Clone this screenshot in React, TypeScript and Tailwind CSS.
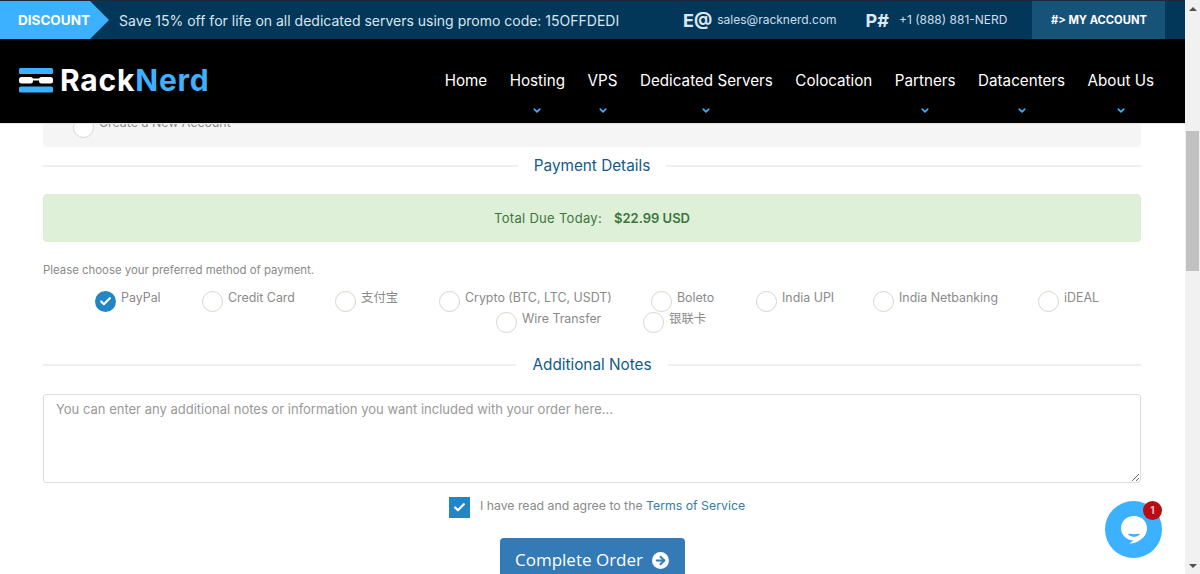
import React from 'react';
import { Check, ChevronDown, ArrowRight } from 'lucide-react';

const FONT = "font-['Inter','Noto_Sans_CJK_SC',sans-serif]";

const navItems = [
  { label: 'Home', caret: false },
  { label: 'Hosting', caret: true },
  { label: 'VPS', caret: true },
  { label: 'Dedicated Servers', caret: true },
  { label: 'Colocation', caret: false },
  { label: 'Partners', caret: true },
  { label: 'Datacenters', caret: true },
  { label: 'About Us', caret: true },
];

const Radio = ({ label, checked, className }: { label: string; checked?: boolean; className: string }) => (
  <div className={`flex items-start gap-[5px] ${className}`}>
    {checked ? (
      <span className="mt-[2px] flex h-[21px] w-[21px] shrink-0 items-center justify-center rounded-full bg-[#2286c6]">
        <Check className="h-[13px] w-[13px] text-white" strokeWidth={4} />
      </span>
    ) : (
      <span className="mt-[2px] h-[21px] w-[21px] shrink-0 rounded-full border border-[#d8d5cd] bg-white" />
    )}
    <span className="whitespace-nowrap text-[12.4px] leading-[18px] text-[#8a8a8a]">{label}</span>
  </div>
);

const Divider = ({ title }: { title: string }) => (
  <div className="flex items-center">
    <div className="h-[2px] flex-1 bg-[#efefef]" />
    <h3 className="px-[16px] text-[15.3px] font-normal leading-[20px] text-[#135a87]">{title}</h3>
    <div className="h-[2px] flex-1 bg-[#efefef]" />
  </div>
);

const Logo = () => (
  <svg width="34" height="25" viewBox="0 0 34 25" className="shrink-0">
    <rect x="0" y="0" width="34" height="6" rx="1.5" fill="#3bb1ff" />
    <rect x="0" y="18.5" width="34" height="6" rx="1.5" fill="#3bb1ff" />
    <rect x="0" y="9" width="14" height="6.5" rx="2.5" fill="#fff" />
    <rect x="20" y="9" width="14" height="6.5" rx="2.5" fill="#fff" />
    <rect x="13" y="10.5" width="8" height="2" fill="#fff" />
  </svg>
);

const ChatBubble = () => (
  <svg width="28" height="29" viewBox="0 0 28 29">
    <path d="M14 1C6.5 1 1 6.3 1 13.2c0 6.7 5.5 12.2 12.6 12.2l-4.4 3.2c4 .2 8.4-1.4 11.5-4.1 3.7-2.3 6.3-6.3 6.3-11.3C27 6.3 21.5 1 14 1z" fill="#fff" />
    <path d="M9 19.5c3 2 7 2 10 0-3 .6-7 .6-10 0z" fill="#3bb1ff" stroke="#3bb1ff" strokeWidth="1.5" strokeLinejoin="round" />
  </svg>
);

export default function App() {
  return (
    <div className={`flex h-[574px] w-[1200px] overflow-hidden bg-white ${FONT}`}>
      <div className="relative h-full w-[1185px] overflow-hidden">
        {/* Header */}
        <header className="relative z-10">
          <div className="flex h-[39px] items-stretch border-t border-[#1f2a36] bg-[#02375a]">
            <div
              className="flex w-[109px] items-center pl-[18px] text-[13.5px] font-bold text-white bg-[#3bb1ff] [clip-path:polygon(0_0,90px_0,109px_50%,90px_100%,0_100%)]"
            >
              DISCOUNT
            </div>
            <div className="ml-[10px] flex w-[564px] items-center whitespace-nowrap text-[14px] text-[#d9e6ee]">
              Save 15% off for life on all dedicated servers using promo code: 15OFFDEDI
            </div>
            <div className="flex items-center">
              <span className="text-[18px] font-bold text-[#dce8f0]">E@</span>
              <span className="ml-[5px] text-[12px] text-[#cfdfe9]">sales@racknerd.com</span>
            </div>
            <div className="ml-[29px] flex items-center">
              <span className="text-[18px] font-bold text-[#dce8f0]">P#</span>
              <span className="ml-[10px] text-[12px] text-[#cfdfe9]">+1 (888) 881-NERD</span>
            </div>
            <div className="ml-[25px] flex w-[133px] items-center justify-center bg-[#175278] text-[11.2px] font-bold text-white">
              #&gt; MY ACCOUNT
            </div>
          </div>
          <nav className="flex h-[85px] items-start justify-between border-b border-[#e6e6e6] bg-black pl-[19px] pr-[31px]">
            <div className="mt-[27px] flex items-center gap-[7px]">
              <Logo />
              <span className="text-[30px] font-bold leading-[28px] tracking-[0.8px] text-white">
                Rack<span className="text-[#3bb1ff]">Nerd</span>
              </span>
            </div>
            <ul className="flex gap-[22.5px] pt-[33px]">
              {navItems.map(item => (
                <li key={item.label} className="relative text-[15.2px] leading-[18px] text-white">
                  {item.label}
                  {item.caret && (
                    <ChevronDown
                      className="absolute left-1/2 top-[33px] h-[11px] w-[11px] -translate-x-1/2 text-[#3bb1ff]"
                      strokeWidth={3.5}
                    />
                  )}
                </li>
              ))}
            </ul>
          </nav>
        </header>

        {/* Checkout form */}
        <main className="px-[43px] pr-[44px]">
          <div className="h-[23px] overflow-hidden rounded-b-sm bg-[#f5f5f5] pl-[30px]">
            <div className="-mt-[9px] flex items-start gap-[5px]">
              <span className="mt-[2px] h-[21px] w-[21px] rounded-full border border-[#d8d5cd] bg-white" />
              <span className="-mt-[1px] text-[12.4px] leading-[18px] text-[#8a8a8a]">Create a New Account</span>
            </div>
          </div>

          <div className="mt-[9px]">
            <Divider title="Payment Details" />
          </div>

          <div className="mt-[18px] flex h-[48px] items-center justify-center gap-[12px] rounded-[4px] border border-[#dcefd5] bg-[#dff0d8] pt-[1px] text-[#3c763d]">
            <span className="text-[13px] tracking-[0.3px]">Total Due Today:</span>
            <strong className="text-[13px] font-semibold">$22.99 USD</strong>
          </div>

          <p className="mt-[21px] text-[11.4px] leading-[14px] text-[#8a8a8a]">Please choose your preferred method of payment.</p>

          <div className="mt-[12px] h-[46px]">
            <div className="flex">
              <Radio className="ml-[52px] w-[107px]" label="PayPal" checked />
              <Radio className="w-[133px]" label="Credit Card" />
              <Radio className="w-[104px]" label="支付宝" />
              <Radio className="w-[212px]" label="Crypto (BTC, LTC, USDT)" />
              <Radio className="w-[105px]" label="Boleto" />
              <Radio className="w-[117px]" label="India UPI" />
              <Radio className="w-[165px]" label="India Netbanking" />
              <Radio label="iDEAL" />
            </div>
            <div className="-mt-[2px] flex">
              <Radio className="ml-[453px] w-[147px]" label="Wire Transfer" />
              <Radio label="银联卡" />
            </div>
          </div>

          <div className="mt-[20px]">
            <Divider title="Additional Notes" />
          </div>

          <textarea
            readOnly
            className="mt-[19px] block h-[89px] w-full rounded-[3px] border border-[#dddddd] bg-white px-[12px] py-[5px] text-[13px] outline-none placeholder:text-[#999999]"
            placeholder="You can enter any additional notes or information you want included with your order here..."
          />

          <div className="mt-[14px] flex items-start justify-center gap-[10px] pl-[10px]">
            <span className="flex h-[21px] w-[21px] items-center justify-center bg-[#2286c6]">
              <Check className="h-[13px] w-[13px] text-white" strokeWidth={4} />
            </span>
            <span className="text-[12.3px] leading-[18px] text-[#8a8a8a]">
              I have read and agree to the <a className="text-[#3a7ca5]">Terms of Service</a>
            </span>
          </div>

          <div className="mt-[20px] flex justify-center">
            <button className="flex h-[44px] w-[185px] items-center justify-center gap-[9px] rounded-[4px] bg-[#337ab7] font-['Open_Sans',sans-serif] text-[17px] leading-[44px] text-white">
              Complete Order
              <span className="flex h-[17px] w-[17px] items-center justify-center rounded-full bg-white">
                <ArrowRight className="h-[13px] w-[13px] text-[#337ab7]" strokeWidth={3.5} />
              </span>
            </button>
          </div>
        </main>

        {/* Chat widget */}
        <div className="absolute left-[1105px] top-[501px] flex h-[57px] w-[57px] items-center justify-center rounded-full bg-[#3bb1ff]">
          <ChatBubble />
          <span className="absolute right-0 top-0 flex h-[19px] w-[19px] items-center justify-center rounded-full bg-[#b80d12] text-[10px] font-bold text-[#f4b6d0]">
            1
          </span>
        </div>
      </div>

      {/* Browser scrollbar */}
      <div className="flex h-full w-[15px] flex-col bg-[#f1f1f1]">
        <div className="flex h-[17px] items-center justify-center">
          <span className="h-0 w-0 border-x-[4px] border-b-[4px] border-x-transparent border-b-[#505050]" />
        </div>
        <div className="ml-px mt-[114px] h-[140px] w-[13px] bg-[#c1c1c1]" />
        <div className="flex-1" />
        <div className="flex h-[17px] items-center justify-center">
          <span className="h-0 w-0 border-x-[4px] border-t-[4px] border-x-transparent border-t-[#505050]" />
        </div>
      </div>
    </div>
  );
}
